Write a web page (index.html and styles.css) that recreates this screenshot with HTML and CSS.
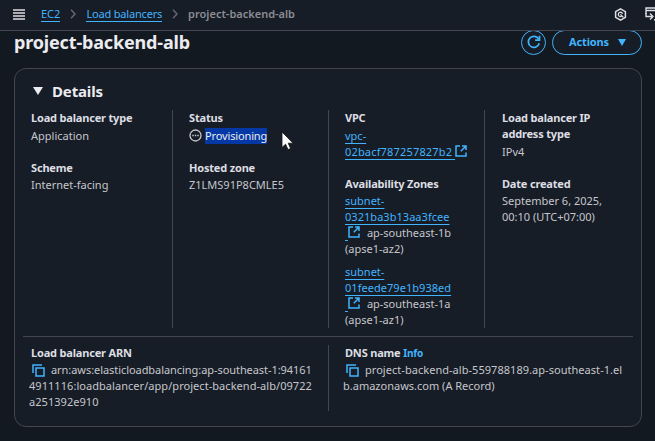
FILE: index.html
```html
<!DOCTYPE html>
<html lang="en">
<head>
<meta charset="utf-8">
<title>project-backend-alb</title>
<link rel="stylesheet" href="styles.css">
</head>
<body>
<svg width="0" height="0" class="defs">
  <symbol id="external" viewBox="0 0 12 12"><path d="M5 1H1v10h10V7.500M7 1h4v4M11 1L5.800 6.200" fill="none" stroke="currentColor" stroke-width="1.500"/></symbol>
  <symbol id="copy" viewBox="0 0 13 13"><path d="M1 9V1h9" fill="none" stroke="currentColor" stroke-width="1.500"/><path d="M4 4h8v8H4z" fill="none" stroke="currentColor" stroke-width="1.500"/></symbol>
  <symbol id="chevron" viewBox="0 0 6 10"><path d="M1 .8L5 5 1 9.200" fill="none" stroke="currentColor" stroke-width="1.500"/></symbol>
</svg>
<header class="topbar">
  <svg class="menu" width="12" height="11" viewBox="0 0 12 11"><path d="M0 1h12M0 4h12M0 7h12M0 10h12" stroke="currentColor" stroke-width="1.400"/></svg>
  <nav class="crumbs">
    <a class="ec2">EC2</a>
    <svg width="6" height="10"><use href="#chevron"/></svg>
    <a class="lbs">Load balancers</a>
    <svg width="6" height="10"><use href="#chevron"/></svg>
    <span class="current">project-backend-alb</span>
  </nav>
  <div class="tools">
    <svg width="13" height="13" viewBox="0 0 13 13" fill="none" stroke="currentColor"><path d="M6.500 .9l4.900 2.800v5.600l-4.900 2.800-4.900-2.800V3.700z" stroke-width="1.500"/><path d="M8.300 7.700A2.200 2.200 0 1 1 8.600 5.800M6.400 6.400l3 3" stroke-width="1.300"/></svg>
    <svg width="14" height="14" viewBox="0 0 14 14" fill="none" stroke="currentColor" stroke-width="1.400"><path d="M1 7V1h13M1 3.500h13"/><path d="M1 6v3.500h6M5 6.500l3 3-3 3M9 12.800h4"/></svg>
  </div>
</header>
<main>
  <div class="heading">
    <h1>project-backend-alb</h1>
    <div class="buttons">
      <button class="refresh" aria-label="Refresh"><svg width="14" height="14" viewBox="0 0 14 14" fill="none" stroke="currentColor" stroke-width="1.700"><path d="M12.200 8.300A5.500 5.500 0 1 1 11.700 4.200"/><path d="M12.500 .8v4.400H8.100"/></svg></button>
      <button class="actions"><span>Actions</span><i class="tri"></i></button>
    </div>
  </div>
  <section class="card">
    <h2><i class="tri"></i><span>Details</span></h2>
    <div class="grid overview">
      <div class="col">
        <dl><dt>Load balancer type</dt><dd>Application</dd></dl>
        <dl><dt>Scheme</dt><dd>Internet-facing</dd></dl>
      </div>
      <div class="col">
        <dl><dt>Status</dt><dd class="status"><svg width="13" height="13" viewBox="0 0 13 13"><circle cx="6.500" cy="6.500" r="5.500" fill="none" stroke="currentColor" stroke-width="1.300"/><path d="M3.300 6.500h1.500M5.800 6.500h1.500M8.300 6.500h1.500" stroke="currentColor" stroke-width="1.400"/></svg><mark>Provisioning</mark></dd></dl>
        <dl><dt>Hosted zone</dt><dd>Z1LMS91P8CMLE5</dd></dl>
      </div>
      <div class="col">
        <dl><dt>VPC</dt><dd><a>vpc-<br><span class="id vpc">02bacf787257827b2</span>&nbsp;</a><svg class="ext" width="12" height="12"><use href="#external"/></svg></dd></dl>
        <dl><dt>Availability Zones</dt>
          <dd><a>subnet-<br><span class="id">0321ba3b13aa3fcee</span><br>&nbsp;</a><svg class="ext" width="12" height="12"><use href="#external"/></svg><span class="zone-name">ap-southeast-1b</span><br>(apse1-az2)</dd>
          <dd class="next"><a>subnet-<br><span class="id">01feede79e1b938ed</span><br>&nbsp;</a><svg class="ext" width="12" height="12"><use href="#external"/></svg><span class="zone-name">ap-southeast-1a</span><br>(apse1-az1)</dd>
        </dl>
      </div>
      <div class="col">
        <dl><dt>Load balancer IP<br>address type</dt><dd>IPv4</dd></dl>
        <dl><dt>Date created</dt><dd>September 6, 2025,<br>00:10 (UTC+07:00)</dd></dl>
      </div>
    </div>
    <div class="grid names">
      <div class="col">
        <dl><dt>Load balancer ARN</dt><dd class="long"><svg class="copy" width="13" height="13"><use href="#copy"/></svg><span class="arn">arn:aws:elasticloadbalancing:ap-southeast-1:94161</span><br><span class="path">4911116:loadbalancer/app/project-backend-alb/09722</span><br><span class="path">a251392e910</span></dd></dl>
      </div>
      <div class="col">
        <dl><dt>DNS name <a class="info">Info</a></dt><dd class="long"><svg class="copy" width="13" height="13"><use href="#copy"/></svg><span class="dns">project-backend-alb-559788189.ap-southeast-1.el</span><br>b.amazonaws.com (A Record)</dd></dl>
      </div>
    </div>
  </section>
</main>
<svg class="pointer" width="13" height="20" viewBox="0 0 13 20"><path d="M1 1v15.500l3.600-3.300 2.400 5.400 2.600-1.100-2.400-5.300h4.900z" fill="#fff" stroke="#111" stroke-width=".8"/></svg>
</body>
</html>
```
FILE: styles.css
```css
* { box-sizing: border-box; }
body {
  margin: 0;
  width: 655px;
  height: 441px;
  overflow: hidden;
  background: #131920;
  color: #c6c6cd;
  font: 11px/16px "Noto Sans", "Open Sans", sans-serif;
  white-space: nowrap;
}
.defs { position: absolute; }
svg { flex: none; }
a { color: #42b4ff; }
.topbar {
  position: relative;
  z-index: 1;
  display: flex;
  align-items: center;
  height: 31px;
  padding: 0 0 2px 13px;
  background: #161d26;
  border-bottom: 1px solid #424650;
}
.menu { color: #dedee3; margin-right: 16px; }
.crumbs { display: flex; align-items: center; color: #656871; }
.crumbs a { border-bottom: 1px solid #42b4ff; line-height: 14px; }
.crumbs svg { margin: 0 10px; }
.lbs { letter-spacing: -.18px; }
.current { color: #8c8c94; font-weight: 600; }
.tools { display: flex; align-items: center; gap: 18px; margin-left: auto; margin-right: -4px; color: #dedee3; }
.heading { display: flex; align-items: center; justify-content: space-between; height: 26px; margin-top: -2px; padding: 0 13px 0 14px; }
h1 { margin: 0; font-size: 18px; line-height: 24px; font-weight: 700; color: #ebebf0; letter-spacing: -.16px; }
.buttons { display: flex; gap: 6px; }
button {
  display: flex;
  align-items: center;
  justify-content: center;
  height: 25px;
  padding: 0;
  border: 1.5px solid #42b4ff;
  border-radius: 13px;
  background: #161d26;
  color: #42b4ff;
  font: 700 11px/16px "Noto Sans", sans-serif;
}
.refresh { width: 25px; }
.actions { width: 90px; gap: 9px; letter-spacing: -.15px; padding-left: 1px; }
.tri { border: solid transparent; border-width: 7px 4.5px 0; border-top-color: currentColor; }
.card { margin: 13px 13px 0 14px; height: 359px; border: 1px solid #424650; border-radius: 12px; background: #161d26; }
h2 { display: flex; align-items: center; gap: 9px; margin: 0; padding: 10px 0 0 18px; font-size: 15px; line-height: 24px; color: #ebebf0; letter-spacing: -.15px; }
h2 .tri { border-width: 8px 5px 0; }
.grid { display: grid; }
.overview { grid-template-columns: 150px 156px 156px 146px; height: 218px; margin: 7px 8px 0; }
.col { padding-left: 8px; border-right: 1px solid #424650; }
.col + .col { padding-left: 16px; }
.overview .col:last-child { padding-left: 17px; }
.col:last-child { border-right: 0; }
dl { margin: 0; }
dl + dl { margin-top: 16px; }
dt { color: #dedee3; font-weight: 700; letter-spacing: -.18px; }
dd { margin: 1.500px 0 0; }
.col a:not(.info) { text-decoration: underline; text-underline-offset: 3px; }
.status { display: flex; align-items: center; gap: 3px; }
mark { background: #0439a5; color: #ebebf0; letter-spacing: -.14px; }
.ext { color: #42b4ff; vertical-align: -1px; }
.id { letter-spacing: .04px; }
.vpc { letter-spacing: .17px; }
.zone-name { margin-left: 7px; }
.next { margin-top: 7px; }
.info { font-size: 10px; }
.names { grid-template-columns: 306px 303px; height: 75px; margin: 8px 8px 0; padding: 8px 0 0; border-top: 1px solid #424650; }
.names dd { margin-top: 1px; }
.long { margin-left: -2px; }
.arn { letter-spacing: -.06px; }
.path { letter-spacing: .05px; }
.dns { letter-spacing: .04px; }
.copy { color: #42b4ff; margin: 0 6px 0 3px; vertical-align: -3px; }
.pointer { position: absolute; left: 281px; top: 131px; }
```
